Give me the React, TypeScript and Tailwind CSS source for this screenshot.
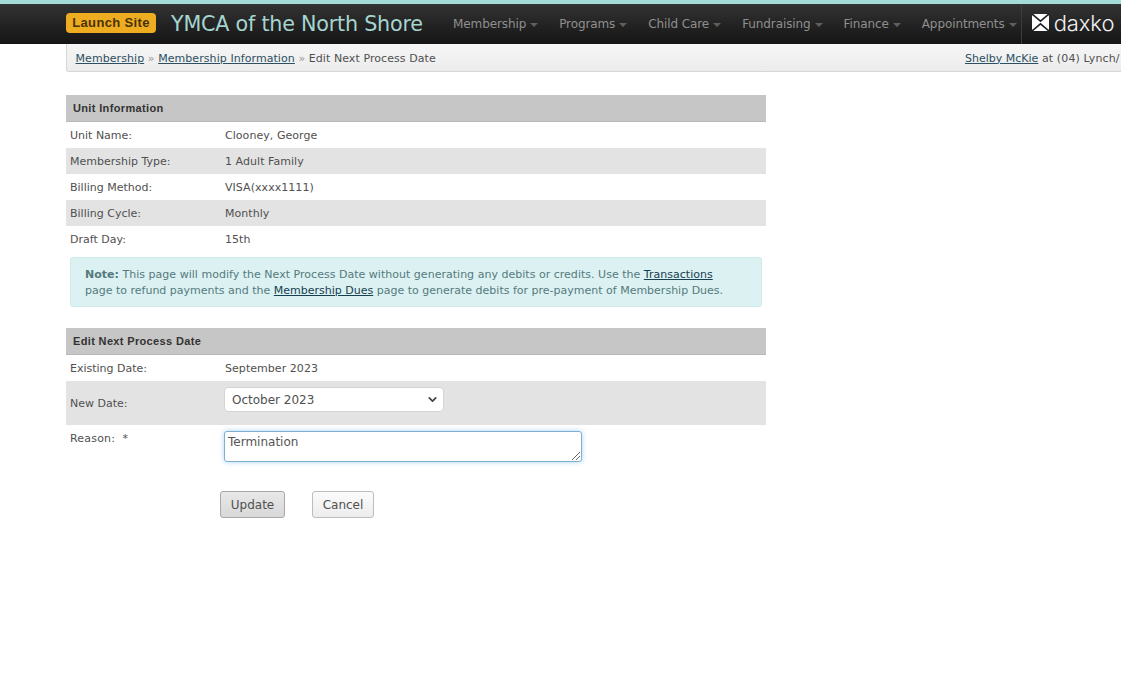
import { ChevronDown } from "lucide-react";

const navItems = ["Membership", "Programs", "Child Care", "Fundraising", "Finance", "Appointments"];

const unitRows = [
  { label: "Unit Name:", value: "Clooney, George" },
  { label: "Membership Type:", value: "1 Adult Family" },
  { label: "Billing Method:", value: "VISA(xxxx1111)" },
  { label: "Billing Cycle:", value: "Monthly" },
  { label: "Draft Day:", value: "15th" },
];

function SectionHeader({ title }: { title: string }) {
  return (
    <div className="h-[27px] bg-[#c6c6c6] border-b border-[#b8b8b8] pl-[7px] flex items-center text-[11px] font-bold font-['Liberation_Sans'] text-[#333] tracking-[0.35px]">
      {title}
    </div>
  );
}

function Row({ label, value, shaded }: { label: string; value: string; shaded?: boolean }) {
  return (
    <div className={`h-[26px] flex items-center pl-[4px] pt-[2px] ${shaded ? "bg-[#e3e3e3]" : "bg-white"}`}>
      <div className="w-[155px] shrink-0">{label}</div>
      <div className="tracking-[0.05px]">{value}</div>
    </div>
  );
}

export default function App() {
  return (
    <div className="w-[1121px] h-[679px] overflow-hidden bg-white text-[11px] leading-[16px] text-[#505050] font-['DejaVu_Sans',sans-serif]">
      {/* Top bar */}
      <div className="h-[4px] bg-[#a6dcd7]" />
      <div className="h-[40px] bg-gradient-to-b from-[#333333] to-[#151515] flex items-center pl-[66px] whitespace-nowrap">
        <div className="h-[20px] w-[90px] mb-[2px] rounded-[4px] bg-[#eeac20] text-[#4a3208] text-[13px] font-bold flex items-center justify-center font-['Liberation_Sans'] tracking-[0.35px]">
          Launch Site
        </div>
        <div className="ml-[15px] w-[282px] text-[20.7px] text-[#a5d5d0] font-['DejaVu_Sans'] tracking-[-0.22px]">
          YMCA of the North Shore
        </div>
        <nav className="flex items-center h-full text-[12px] text-[#8f8f8f] font-['DejaVu_Sans'] tracking-[-0.1px]">
          {navItems.map((item) => (
            <div key={item} className="flex items-center mr-[21px] last:mr-[4px]">
              {item}
              <span className="ml-[4px] mt-[1px] border-x-[4px] border-t-[4px] border-x-transparent border-t-[#5f5f5f]" />
            </div>
          ))}
        </nav>
        <div className="h-full border-l border-[#3c3c3c] flex items-center pl-[10px] gap-[5px]">
          <svg viewBox="0 0 18 18" className="w-[17px] h-[17px] mb-[3px]">
            <rect width="18" height="18" rx="3" fill="#fff" />
            <path d="M0 0 9 7.5 18 0M0 18 9 10.5 18 18" fill="none" stroke="#1f1f1f" strokeWidth="1.7" />
          </svg>
          <span className="text-[22px] font-light text-[#f2f2f2] font-['Inter'] tracking-[-0.1px] mb-[3px]">daxko</span>
        </div>
      </div>

      {/* Breadcrumb */}
      <div className="ml-[66px] h-[28px] bg-gradient-to-b from-[#f6f6f6] to-[#ececec] border-l border-b border-[#d6d6d6] rounded-bl-[3px] flex items-center justify-between pt-[2px] pl-[8.5px] whitespace-nowrap overflow-hidden">
        <div className="tracking-[0.07px]">
          <a className="underline text-[#2c4f63]">Membership</a>
          <span className="text-[#999]"> » </span>
          <a className="underline text-[#2c4f63]">Membership Information</a>
          <span className="text-[#999]"> » </span>
          Edit Next Process Date
        </div>
        <div className="w-[156px] shrink-0">
          <a className="underline text-[#2c4f63]">Shelby McKie</a>
          <span className="tracking-[0.12px]"> at (04) Lynch/</span>
        </div>
      </div>

      {/* Form */}
      <main className="ml-[66px] w-[700px] pt-[23px]">
        <SectionHeader title="Unit Information" />
        {unitRows.map((row, i) => (
          <Row key={row.label} label={row.label} value={row.value} shaded={i % 2 === 1} />
        ))}

        <div className="mx-[4px] mt-[5px] h-[50px] rounded-[3px] bg-[#dcf1f1] border border-[#d0e9e9] pl-[14px] pt-[9px] text-[#557a7e] whitespace-nowrap">
          <div className="tracking-[0.02px]">
            <b>Note:</b> This page will modify the Next Process Date without generating any debits or credits. Use the{" "}
            <a className="underline text-[#163f52]">Transactions</a>
          </div>
          <div>
            page to refund payments and the <a className="underline text-[#163f52]">Membership Dues</a> page to generate
            debits for pre-payment of Membership Dues.
          </div>
        </div>

        <div className="mt-[21px]">
          <SectionHeader title="Edit Next Process Date" />
        </div>
        <Row label="Existing Date:" value="September 2023" />
        <div className="h-[44px] bg-[#e3e3e3] flex items-center pl-[4px]">
          <div className="w-[154px] shrink-0 pt-[1px]">New Date:</div>
          <div className="mb-[7px] w-[220px] h-[25px] bg-white border border-[#d4d4d4] rounded-[4px] pl-[7px] pr-[4px] flex items-center justify-between text-[12px]">
            October 2023
            <ChevronDown size={13} strokeWidth={3.2} className="text-[#444]" />
          </div>
        </div>
        <div className="flex pl-[4px] pt-[6px]">
          <div className="w-[154px] shrink-0 tracking-[0.2px]">Reason:&nbsp; *</div>
          <div className="relative w-[358px] h-[31px] bg-white border border-[#7fb0d0] rounded-[3px] shadow-[0_0_5px_rgba(82,168,236,0.5)] pl-[3px] pt-[1px] text-[12px] leading-[18px] text-[#555]">
            Termination
            <svg viewBox="0 0 8 8" className="absolute right-[1px] bottom-[1px] w-[8px] h-[8px]">
              <path d="M0 8 8 0M4 8 8 4" stroke="#666" strokeWidth="1" />
            </svg>
          </div>
        </div>

        <div className="flex mt-[29px] ml-[154px] gap-[27px] text-[12px]">
          <button className="h-[27px] w-[65px] rounded-[3px] border border-[#a8a8a8] bg-gradient-to-b from-[#e8e8e8] to-[#d8d8d8] text-[#505050]">
            Update
          </button>
          <button className="h-[27px] w-[62px] rounded-[3px] border border-[#bdbdbd] bg-gradient-to-b from-[#fbfbfb] to-[#ededed] text-[#505050]">
            Cancel
          </button>
        </div>
      </main>
    </div>
  );
}
